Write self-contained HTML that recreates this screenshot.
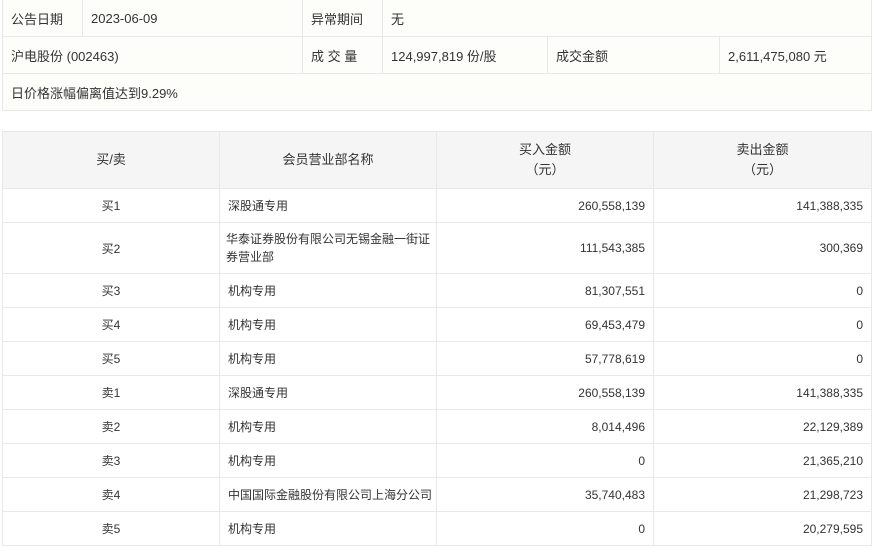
<!DOCTYPE html>
<html><head><meta charset="utf-8"><style>
body{margin:0;background:#fff;font-family:"Liberation Sans","Noto Sans CJK SC",sans-serif;color:#333;width:875px;height:548px;overflow:hidden;position:relative}
table{border-collapse:collapse;position:absolute;left:2px;table-layout:fixed}
td{border:1px solid #e8e8e8;padding:0 8px;box-sizing:border-box;white-space:nowrap}
#t1{top:-1px;width:869px;background:#fdfdf9;font-size:13px}
#t1 td{height:37px}
#t2{top:131px;width:869px;font-size:12px}
#t2 td{height:34px}
#t2 tr.h td{height:57px;background:#f5f5f5;text-align:center;line-height:20px;font-size:13px}
.c{text-align:center}.r{text-align:right}
.w{white-space:normal!important;line-height:18px;padding:0 1px 0 6px!important}
</style></head><body>
<table id="t1">
<colgroup><col style="width:80px"><col style="width:220px"><col style="width:80px"><col style="width:165px"><col style="width:172px"><col style="width:152px"></colgroup>
<tr><td>公告日期</td><td>2023-06-09</td><td>异常期间</td><td colspan="3">无</td></tr>
<tr><td colspan="2">沪电股份 (002463)</td><td>成 交 量</td><td>124,997,819 份/股</td><td>成交金额</td><td>2,611,475,080 元</td></tr>
<tr><td colspan="6">日价格涨幅偏离值达到9.29%</td></tr>
</table>
<table id="t2">
<colgroup><col style="width:217px"><col style="width:217px"><col style="width:217px"><col style="width:218px"></colgroup>
<tr class="h"><td>买/卖</td><td>会员营业部名称</td><td>买入金额<br>（元）</td><td>卖出金额<br>（元）</td></tr>
<tr><td class="c">买1</td><td>深股通专用</td><td class="r">260,558,139</td><td class="r">141,388,335</td></tr>
<tr><td class="c" style="height:51px">买2</td><td class="w">华泰证券股份有限公司无锡金融一街证券营业部</td><td class="r">111,543,385</td><td class="r">300,369</td></tr>
<tr><td class="c">买3</td><td>机构专用</td><td class="r">81,307,551</td><td class="r">0</td></tr>
<tr><td class="c">买4</td><td>机构专用</td><td class="r">69,453,479</td><td class="r">0</td></tr>
<tr><td class="c">买5</td><td>机构专用</td><td class="r">57,778,619</td><td class="r">0</td></tr>
<tr><td class="c">卖1</td><td>深股通专用</td><td class="r">260,558,139</td><td class="r">141,388,335</td></tr>
<tr><td class="c">卖2</td><td>机构专用</td><td class="r">8,014,496</td><td class="r">22,129,389</td></tr>
<tr><td class="c">卖3</td><td>机构专用</td><td class="r">0</td><td class="r">21,365,210</td></tr>
<tr><td class="c">卖4</td><td>中国国际金融股份有限公司上海分公司</td><td class="r">35,740,483</td><td class="r">21,298,723</td></tr>
<tr><td class="c">卖5</td><td>机构专用</td><td class="r">0</td><td class="r">20,279,595</td></tr>
</table>
</body></html>
